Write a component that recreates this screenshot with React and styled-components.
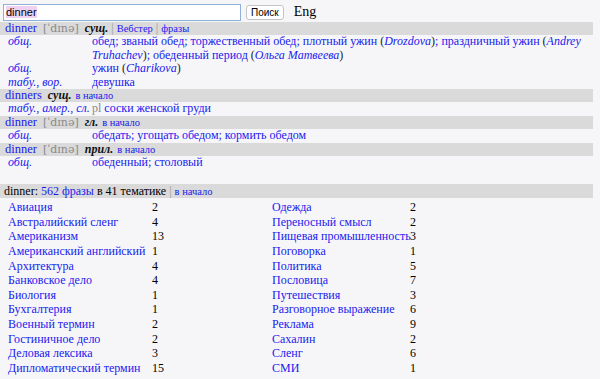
import React from 'react';
import styled, { createGlobalStyle } from 'styled-components';

const GlobalStyle = createGlobalStyle`
    body {
        margin: 0;
        background: #f6f6f8;
        font-family: "Liberation Serif", "Times New Roman", serif;
        font-size: 12px;
        color: #000;
    }
`;

const BLUE = '#1a1aef';

const Page = styled.div`
    width: 593px;
    padding-top: 3px;
`;

const SearchBar = styled.form`
    display: flex;
    align-items: center;
    height: 18px;
    padding-left: 3px;
    margin-bottom: 1px;
`;

const SearchInput = styled.div`
    box-sizing: border-box;
    width: 238px;
    height: 17px;
    border: 1px solid #8fb0d8;
    background: #fff;
    display: flex;
    align-items: center;
    padding-left: 2px;
    font-family: "Liberation Sans", Arial, sans-serif;
    font-size: 11px;
`;

const Selected = styled.span`
    background: #efd2f2;
`;

const SearchButton = styled.button`
    margin-left: 5px;
    height: 15px;
    padding: 0 4px;
    border: 1px solid #c4c4c4;
    border-radius: 3px;
    background: #fff;
    font-family: "Liberation Sans", Arial, sans-serif;
    font-size: 10px;
    line-height: 13px;
`;

const LangLink = styled.span`
    margin-left: 10px;
    font-size: 14px;
`;

const HeadBar = styled.div`
    background: #dadada;
    height: 13.4px;
    display: flex;
    align-items: center;
    padding-left: 5px;
    white-space: nowrap;
`;

const Word = styled.a`
    color: ${BLUE};
    font-size: 12.5px;
    text-decoration: none;
`;

const Trans = styled.span`
    color: #8a8a8a;
    margin-left: 6px;
    font-family: "DejaVu Serif", "Liberation Serif", serif;
    font-size: 11px;
`;

const Pos = styled.em`
    font-weight: bold;
    font-size: 12px;
    margin-left: 6px;
    color: #111;
`;

const Sep = styled.span`
    color: #999;
    margin: 0 3px;
`;

const SmallLink = styled.a`
    color: ${BLUE};
    font-size: 10.5px;
    text-decoration: none;
    margin-left: ${p => (p.$gap ? 4 : 0)}px;
`;

const DefRow = styled.div`
    display: grid;
    grid-template-columns: 92px 1fr;
    line-height: 13.4px;
`;

const Subj = styled.em`
    color: ${BLUE};
    padding-left: 8px;
    white-space: nowrap;
`;

const Terms = styled.span`
    color: ${BLUE};
`;

const Author = styled.em`
    color: ${BLUE};
`;

const Paren = styled.span`
    color: #222;
`;

const Gray = styled.span`
    color: #8a8a8a;
`;

const PhraseHead = styled.div`
    background: #dadada;
    height: 14px;
    margin-top: 15px;
    display: flex;
    align-items: center;
    padding-left: 4px;
    font-size: 12px;
    white-space: nowrap;
`;

const PhraseGrid = styled.div`
    display: grid;
    grid-template-columns: 144px 120px 138px 1fr;
    grid-auto-rows: 14.6px;
    padding-left: 8px;
    padding-top: 2px;
    align-items: center;
    font-size: 12px;
`;

const Topic = styled.a`
    color: ${BLUE};
    text-decoration: none;
    white-space: nowrap;
`;

const Count = styled.span`
    color: #000;
`;

const left = [
    ['Авиация', 2],
    ['Австралийский сленг', 4],
    ['Американизм', 13],
    ['Американский английский', 1],
    ['Архитектура', 4],
    ['Банковское дело', 4],
    ['Биология', 1],
    ['Бухгалтерия', 1],
    ['Военный термин', 2],
    ['Гостиничное дело', 2],
    ['Деловая лексика', 3],
    ['Дипломатический термин', 15],
];

const right = [
    ['Одежда', 2],
    ['Переносный смысл', 2],
    ['Пищевая промышленность', 3],
    ['Поговорка', 1],
    ['Политика', 5],
    ['Пословица', 7],
    ['Путешествия', 3],
    ['Разговорное выражение', 6],
    ['Реклама', 9],
    ['Сахалин', 2],
    ['Сленг', 6],
    ['СМИ', 1],
];

function Credit({ children }) {
    return (
        <>
            <Paren> (</Paren>
            <Author>{children}</Author>
            <Paren>)</Paren>
        </>
    );
}

export default function App() {
    return (
        <Page>
            <GlobalStyle />
            <SearchBar onSubmit={e => e.preventDefault()}>
                <SearchInput>
                    <Selected>dinner</Selected>
                </SearchInput>
                <SearchButton type="button">Поиск</SearchButton>
                <LangLink>Eng</LangLink>
            </SearchBar>

            <HeadBar>
                <Word>dinner</Word>
                <Trans>[ˈdɪnə]</Trans>
                <Pos>сущ.</Pos>
                <Sep>|</Sep>
                <SmallLink>Вебстер</SmallLink>
                <Sep>|</Sep>
                <SmallLink>фразы</SmallLink>
            </HeadBar>
            <DefRow>
                <Subj>общ.</Subj>
                <Terms>
                    обед; званый обед; торжественный обед; плотный ужин<Credit>Drozdova</Credit>; праздничный ужин
                    <Credit>Andrey Truhachev</Credit>; обеденный период<Credit>Ольга Матвеева</Credit>
                </Terms>
            </DefRow>
            <DefRow>
                <Subj>общ.</Subj>
                <Terms>
                    ужин<Credit>Charikova</Credit>
                </Terms>
            </DefRow>
            <DefRow>
                <Subj>табу., вор.</Subj>
                <Terms>девушка</Terms>
            </DefRow>

            <HeadBar>
                <Word>dinners</Word>
                <Pos>сущ.</Pos>
                <SmallLink $gap>в начало</SmallLink>
            </HeadBar>
            <DefRow>
                <Subj>табу., амер., сл.</Subj>
                <Terms>
                    <Gray>pl</Gray> соски женской груди
                </Terms>
            </DefRow>

            <HeadBar>
                <Word>dinner</Word>
                <Trans>[ˈdɪnə]</Trans>
                <Pos>гл.</Pos>
                <SmallLink $gap>в начало</SmallLink>
            </HeadBar>
            <DefRow>
                <Subj>общ.</Subj>
                <Terms>обедать; угощать обедом; кормить обедом</Terms>
            </DefRow>

            <HeadBar>
                <Word>dinner</Word>
                <Trans>[ˈdɪnə]</Trans>
                <Pos>прил.</Pos>
                <SmallLink $gap>в начало</SmallLink>
            </HeadBar>
            <DefRow>
                <Subj>общ.</Subj>
                <Terms>обеденный; столовый</Terms>
            </DefRow>

            <PhraseHead>
                dinner:&nbsp;<Topic>562 фразы</Topic>&nbsp;в 41 тематике
                <Sep>|</Sep>
                <SmallLink>в начало</SmallLink>
            </PhraseHead>
            <PhraseGrid>
                {left.map(([name, n], i) => (
                    <React.Fragment key={name}>
                        <Topic>{name}</Topic>
                        <Count>{n}</Count>
                        <Topic>{right[i][0]}</Topic>
                        <Count>{right[i][1]}</Count>
                    </React.Fragment>
                ))}
            </PhraseGrid>
        </Page>
    );
}
